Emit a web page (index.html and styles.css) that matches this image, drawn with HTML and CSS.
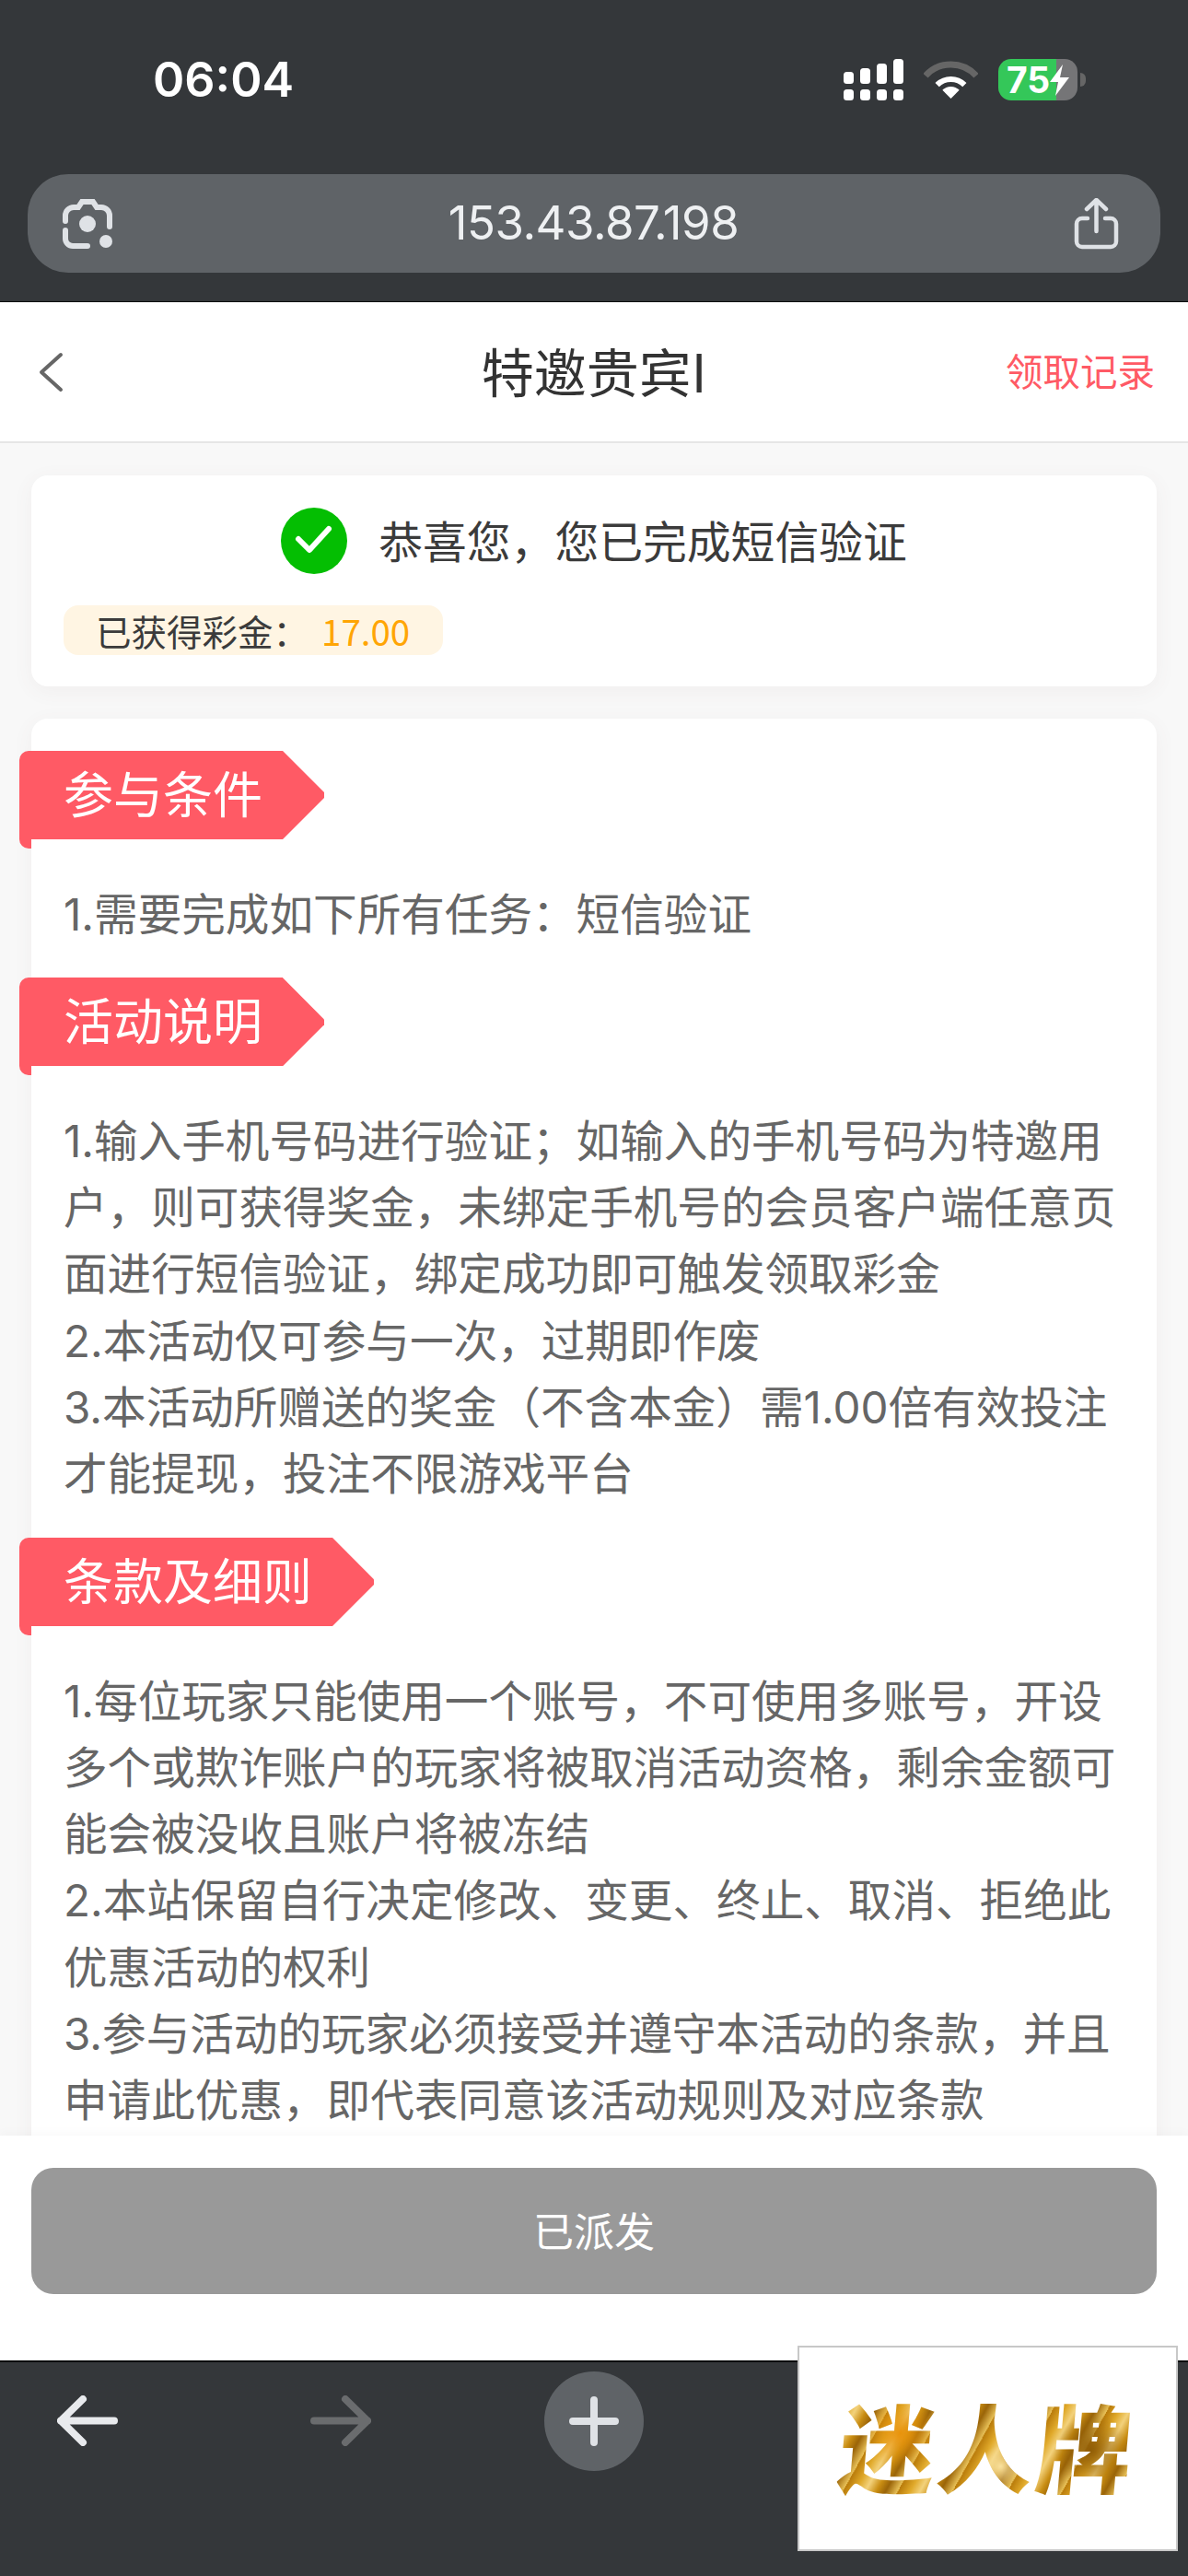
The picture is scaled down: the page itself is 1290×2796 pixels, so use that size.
FILE: index.html
```html
<!DOCTYPE html>
<html lang="zh-CN">
<head>
<meta charset="utf-8">
<title>特邀贵宾I</title>
<link rel="stylesheet" href="styles.css">
</head>
<body>
<div class="phone">
  <header class="browser-top">
    <div class="status">
      <span class="time">06:04</span>
      <div class="status-icons">
        <svg class="signal" width="65" height="45" viewBox="0 0 65 45" fill="#fff">
          <rect x="0" y="14" width="11" height="13" rx="3.5"/><rect x="18" y="10" width="11" height="17" rx="3.5"/><rect x="36" y="5" width="11" height="22" rx="3.5"/><rect x="54" y="0" width="11" height="27" rx="3.5"/>
          <rect x="0" y="33" width="11" height="12" rx="3.5"/><rect x="18" y="33" width="11" height="12" rx="3.5"/><rect x="36" y="33" width="11" height="12" rx="3.5"/><rect x="54" y="33" width="11" height="12" rx="3.5"/>
        </svg>
        <svg class="wifi" width="59" height="41" viewBox="0 0 59 41" fill="none">
          <path d="M2 16.2A37 37 0 0 1 57 16.2" stroke="#666" stroke-width="7"/>
          <path d="M14.65 26.15A21 21 0 0 1 44.35 26.15" stroke="#fff" stroke-width="6"/>
          <path d="M29.5 41L20.3 31.8A13 13 0 0 1 38.7 31.8Z" fill="#fff"/>
        </svg>
        <div class="battery">
          <span class="battery-num">75</span>
          <svg class="bolt" width="21" height="34" viewBox="0 0 21 34" fill="#fff"><path d="M14 0L0 19H9L6 34L21 14H11Z"/></svg>
        </div>
      </div>
    </div>
    <div class="urlbar">
      <svg class="cam" width="56" height="54" viewBox="0 0 56 54" fill="none" stroke="#dfe2e6" stroke-width="6" stroke-linecap="round">
        <path d="M4 24V18A9 9 0 0 1 13 9H18L22 3H34L38 9H43A9 9 0 0 1 52 18V30"/>
        <path d="M4 34V43A8 8 0 0 0 12 51H28"/>
        <circle cx="28" cy="27" r="9" fill="#dfe2e6" stroke="none"/>
        <circle cx="48" cy="46" r="7" fill="#dfe2e6" stroke="none"/>
      </svg>
      <span class="url">153.43.87.198</span>
      <svg class="share" width="49" height="56" viewBox="0 0 49 56" fill="none" stroke="#dfe2e6" stroke-width="4.5" stroke-linecap="round" stroke-linejoin="round">
        <path d="M15 22H9A6 6 0 0 0 3 28V47A6 6 0 0 0 9 53H40A6 6 0 0 0 46 47V28A6 6 0 0 0 40 22H34"/>
        <path d="M24.5 3V36M14 12L24.5 2L35 12"/>
      </svg>
    </div>
  </header>

  <nav class="navbar">
    <svg class="back" width="30" height="44" viewBox="0 0 30 44" fill="none" stroke="#666" stroke-width="4" stroke-linecap="round" stroke-linejoin="round"><path d="M26 3L5 22L26 41"/></svg>
    <h1 class="nav-title">特邀贵宾I</h1>
    <a class="nav-link">领取记录</a>
  </nav>

  <main class="content">
    <section class="card result">
      <div class="result-head">
        <svg class="ok" width="72" height="72" viewBox="0 0 72 72"><circle cx="36" cy="36" r="36" fill="#04be02"/><path d="M19 34L31 46L52 23" fill="none" stroke="#fff" stroke-width="6" stroke-linecap="round" stroke-linejoin="round"/></svg>
        <span class="result-text">恭喜您，您已完成短信验证</span>
      </div>
      <div class="bonus"><span>已获得彩金：</span><span class="bonus-num">17.00</span></div>
    </section>

    <section class="card rules">
      <h2 class="ribbon">参与条件</h2>
      <p class="rule-text">1.需要完成如下所有任务：短信验证</p>
      <h2 class="ribbon">活动说明</h2>
      <p class="rule-text">1.输入手机号码进行验证；如输入的手机号码为特邀用户，则可获得奖金，未绑定手机号的会员客户端任意页面进行短信验证，绑定成功即可触发领取彩金<br>2.本活动仅可参与一次，过期即作废<br>3.本活动所赠送的奖金（不含本金）需1.00倍有效投注才能提现，投注不限游戏平台</p>
      <h2 class="ribbon">条款及细则</h2>
      <p class="rule-text">1.每位玩家只能使用一个账号，不可使用多账号，开设多个或欺诈账户的玩家将被取消活动资格，剩余金额可能会被没收且账户将被冻结<br>2.本站保留自行决定修改、变更、终止、取消、拒绝此优惠活动的权利<br>3.参与活动的玩家必须接受并遵守本活动的条款，并且申请此优惠，即代表同意该活动规则及对应条款</p>
    </section>
  </main>

  <div class="action">
    <button class="action-btn">已派发</button>
  </div>

  <footer class="browser-bottom">
    <svg class="arrow" width="66" height="55" viewBox="0 0 66 55" fill="none" stroke="#e8eaed" stroke-width="8" stroke-linecap="round" stroke-linejoin="round"><path d="M28 4L4 27.5L28 51M4 27.5H62"/></svg>
    <svg class="arrow arrow-next" width="66" height="55" viewBox="0 0 66 55" fill="none" stroke="#6a6c6e" stroke-width="8" stroke-linecap="round" stroke-linejoin="round"><path d="M38 4L62 27.5L38 51M62 27.5H4"/></svg>
    <div class="plus">
      <svg width="54" height="54" viewBox="0 0 54 54" fill="none" stroke="#dfe2e6" stroke-width="8" stroke-linecap="round"><path d="M27 4V50M4 27H50"/></svg>
    </div>
  </footer>

  <aside class="logo"><span class="logo-text">迷人牌</span></aside>
</div>
</body>
</html>
```
FILE: styles.css
```css
* { box-sizing: border-box; }
html, body { margin: 0; padding: 0; }
body { font-family: "Noto Sans CJK SC", "Noto Sans", sans-serif; background: #f8f8f8; }

.phone { position: relative; width: 1290px; height: 2796px; display: flex; flex-direction: column; overflow: hidden; background: #f8f8f8; }

/* browser chrome */
.browser-top { flex: none; height: 328px; background: #34373a; border-bottom: 1px solid #0c0d0e; padding: 64px 30px 0; display: flex; flex-direction: column; }
.status { height: 45px; display: flex; align-items: center; justify-content: space-between; padding: 0 0 0 136px; }
.time { font-family: Inter, sans-serif; font-size: 52px; font-weight: 600; color: #fff; line-height: 51px; }
.status-icons { display: flex; align-items: flex-start; padding-right: 90px; }
.signal { display: block; }
.wifi { display: block; margin: 2px 0 0 22px; }
.battery { position: relative; width: 86px; height: 45px; margin-left: 22px; border-radius: 14px; background: linear-gradient(90deg, #34c759 0, #34c759 63px, #757577 63px); display: flex; align-items: center; padding-left: 9px; }
.battery::after { content: ""; position: absolute; left: 89px; top: 15px; width: 6px; height: 15px; border-radius: 0 6px 6px 0; background: #666; }
.battery-num { font-family: Inter, sans-serif; font-size: 39px; font-weight: 700; color: #fff; line-height: 45px; }
.bolt { display: block; margin-left: 0; }

.urlbar { margin-top: 80px; height: 107px; border-radius: 44px; background: #5f6367; display: flex; align-items: center; justify-content: space-between; padding: 0 45px 0 37px; }
.url { font-family: Inter, sans-serif; font-size: 51px; font-weight: 400; color: #eef0f2; line-height: 1; letter-spacing: -0.5px; margin-bottom: 3px; }
.cam, .share { display: block; flex: none; }

/* nav */
.navbar { flex: none; position: relative; height: 153px; background: #fff; border-bottom: 2px solid #e6e6e6; display: flex; align-items: center; justify-content: space-between; padding: 0 36px 0 40px; }
.back { display: block; }
.nav-title { position: absolute; left: 0; right: 0; top: 0; margin: 0; line-height: 146px; text-align: center; font-size: 57px; font-weight: 400; color: #333; pointer-events: none; }
.nav-link { font-size: 40.5px; color: #ff5a65; line-height: 1; margin-bottom: 3px; }

/* content */
.content { flex: 1; min-height: 0; overflow: hidden; padding: 35px 34px 0; display: flex; flex-direction: column; gap: 35px; }
.card { flex: none; background: #fff; border-radius: 18px; box-shadow: 0 5px 22px rgba(120, 90, 90, .06); }
.result { height: 229px; padding: 35px 35px 0; }
.result-head { display: flex; align-items: center; justify-content: center; gap: 34px; height: 72px; }
.ok { display: block; flex: none; }
.result-text { font-size: 47.8px; line-height: 70px; height: 72px; color: #3b3b3b; }
.bonus { display: inline-flex; align-items: center; gap: 14px; height: 54px; margin-top: 34px; padding: 0 36px 0 35px; border-radius: 16px; background: #fff5e3; color: #3b3b3b; font-size: 38.5px; line-height: 51px; }
.bonus-num { color: #ffa505; }

.rules { padding: 35px 36px 120px 35px; }
.ribbon { position: relative; width: max-content; height: 96px; margin: 0 0 45.5px -48px; padding: 0 22px 0 48px; font-size: 54px; font-weight: 400; line-height: 90px; color: #fff; background: #ff5a65; border-radius: 10px 0 0 0; }
.ribbon::before { content: ""; position: absolute; left: 0; bottom: -10px; width: 13px; height: 20px; background: #ff5a65; border-radius: 0 0 0 10px; }
.ribbon::after { content: ""; position: absolute; left: calc(100% - 1px); top: 0; width: 46px; height: 96px; background: #ff5a65; clip-path: polygon(0 0, 1px 0, 100% 47%, 100% 53%, 1px 100%, 0 100%); }
.rule-text { margin: 0 0 32.5px; font-family: Inter, "Noto Sans CJK SC", sans-serif; font-size: 47.6px; line-height: 72.3px; color: #666; }

/* bottom action */
.action { flex: none; height: 244px; background: #fff; padding: 35px 34px 0; position: relative; box-shadow: 0 -4px 10px rgba(0, 0, 0, .025); }
.action-btn { display: block; width: 100%; height: 137px; border: 0; border-radius: 24px; background: #999; color: #fff; font: inherit; font-size: 44px; line-height: 1; padding: 0 0 4px; }

.browser-bottom { flex: none; height: 234px; background: #34373a; border-top: 2px solid #0c0d0e; padding: 10px 0 0 62px; display: flex; align-items: flex-start; }
.arrow { display: block; margin-top: 26px; flex: none; }
.arrow-next { margin-left: 209px; }
.plus { flex: none; width: 108px; height: 108px; margin-left: 188px; border-radius: 50%; background: #5f6367; display: flex; align-items: center; justify-content: center; }
.plus svg { display: block; }

/* floating logo */
.logo { position: absolute; left: 866px; top: 2546px; width: 413px; height: 223px; background: #fff; border: 2px solid #c8c8c8; display: flex; align-items: center; justify-content: center; padding-bottom: 10px; }
.logo-text { display: block; font-size: 104px; font-weight: 900; line-height: 1.15; letter-spacing: 3px; white-space: nowrap; transform: skewX(-5deg); color: transparent; background: radial-gradient(circle at 20% 40%, #e8920a 0, rgba(232,146,10,0) 14%), radial-gradient(circle at 55% 70%, #f9e2a0 0, rgba(249,226,160,0) 12%), radial-gradient(circle at 85% 55%, #8f5c06 0, rgba(143,92,6,0) 14%), repeating-linear-gradient(115deg, #b87a0a 0, #e0a92a 12px, #f3d27c 22px, #c98d12 33px, #9a6408 42px, #eac35a 54px); -webkit-background-clip: text; background-clip: text; }
```
